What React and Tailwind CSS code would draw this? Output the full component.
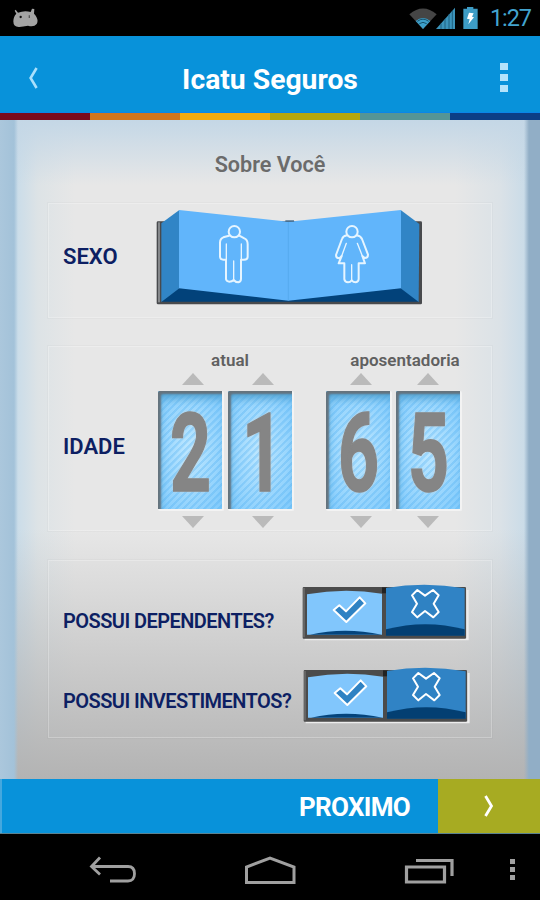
import React from 'react'

const STRIPES = ['bg-[#7a0a1c]', 'bg-[#d0761c]', 'bg-[#f0ab0c]', 'bg-[#b5a70e]', 'bg-[#549596]', 'bg-[#0c3f86]']

const StatusBar = () => (
  <div className="flex h-9 items-center bg-black pl-[12px] pr-[8px]">
    <svg className="h-[20px] w-[27px]" viewBox="0 0 81 60">
      <path d="M8 8 L11 5 L18 14 Q38 6 56 12 L60 2 L67 3 L66 17 Q82 34 74 48 Q66 58 48 53 Q32 56 22 57 Q4 58 4 40 Q4 26 13 17 Z" fill="#a3a3a3" />
      <circle cx="26" cy="27" r="3.5" fill="#111" />
      <path d="M52 22 v8" stroke="#555" strokeWidth="4" />
    </svg>
    <div className="ml-auto flex items-center">
      <svg className="h-[22px] w-[70px]" viewBox="0 0 210 66">
        <path d="M1 22 Q42 -13 83 22 L42 66 Z" fill="#454545" />
        <path d="M20 42 Q42 24 64 42 L42 66 Z" fill="#3d9fc9" />
        <path d="M25 43 Q42 30 59 43" fill="none" stroke="#16526d" strokeWidth="3" />
        <path d="M31 50 Q42 42 53 50" fill="none" stroke="#16526d" strokeWidth="3" />
        <path d="M81 66 L138 2 V66 Z" fill="#3b93ba" />
        <path d="M96 50 V66 M108 36 V66 M120 22 V66 M130 12 V66" stroke="#1f6180" strokeWidth="3" />
        <path d="M163 5 H174 V0 H193 V5 H206 V66 H163 Z" fill="#3d9cc5" />
        <path d="M180 17 L194 19 L189 29 L195 31 L178 52 L182 37 L174 35 Z" fill="#fff" />
      </svg>
      <span className="ml-[11px] w-[42px] whitespace-nowrap text-[23.5px] leading-[34px] tracking-[-1.1px] text-[#43a4cf]">1:27</span>
    </div>
  </div>
)

const Header = () => (
  <header>
    <div className="grid h-[77px] grid-cols-3 items-center border-b border-[#0a86e8] bg-[#0892da] pt-[7px]">
      <svg className="ml-[28px] h-[22px] w-[10px]" viewBox="0 0 10 22">
        <path d="M8.6 1 L2.6 11 L8.6 21" fill="none" stroke="#a9e0fc" strokeWidth="2.6" />
      </svg>
      <h1 className="mt-[5px] whitespace-nowrap text-center text-[28.3px] font-bold leading-none text-white">Icatu Seguros</h1>
      <div className="mr-[32px] flex flex-col gap-[4px] justify-self-end">
        <i className="block h-[7px] w-[8px] bg-[#b3e3fb]" />
        <i className="block h-[7px] w-[8px] bg-[#b3e3fb]" />
        <i className="block h-[7px] w-[8px] bg-[#b3e3fb]" />
      </div>
    </div>
    <div className="grid h-[7px] grid-cols-6">
      {STRIPES.map((c) => <div key={c} className={c} />)}
    </div>
  </header>
)

const Panel = ({ className, children }) => (
  <section className={`mx-[48px] border border-white/25 outline outline-black/[0.02] ${className}`}>{children}</section>
)

const Label = ({ children, className }) => (
  <span className={`whitespace-nowrap font-semibold leading-none text-[#0d1f63] ${className}`}>{children}</span>
)

const GenderSwitch = () => (
  <svg className="h-[97px] w-[267px]" viewBox="48 39 801 291">
    <rect x="50" y="79" width="796" height="249" rx="4" fill="#484a4d" />
    <rect x="54" y="82" width="6" height="240" fill="#85888b" />
    <path d="M64 320 L118 278 L445 315 L784 278 L838 320 Z" fill="#02427a" />
    <path d="M64 85 L118 45 V280 L64 321 Z" fill="#3185c6" />
    <path d="M838 87 L782 45 V280 L836 321 Z" fill="#3185c6" />
    <path d="M117 45 L445 80 L783 45 V280 L445 317 L117 280 Z" fill="#61b5fb" />
    <path d="M445 80 V317" stroke="#52a5ea" strokeWidth="2" />
    <path d="M436 78 H462" stroke="#3c6485" strokeWidth="4" />
    <g fill="none" stroke="#e6f5ff" strokeWidth="6" strokeLinecap="round" strokeLinejoin="round">
      <circle cx="283" cy="110" r="17" />
      <path d="M267 122 L250 127 Q240 131 240 143 V186 Q241 194 250 194 H258 V253 Q260 260 268 260 Q276 260 281 255 Q287 262 295 262 Q303 260 303 252 V194 H312 Q323 194 323 186 V148 Q323 134 313 130 L298 122" />
      <path d="M259 147 V194 M304 147 V194 M281 198 V255" strokeWidth="4" />
      <circle cx="636" cy="110" r="17" />
      <path d="M621 121 Q609 123 606 132 L588 180 Q588 190 598 190 L605 183 L596 205 H613 V253 Q615 262 624 262 Q631 262 635 256 Q640 262 647 262 Q656 260 656 252 V205 H675 L667 183 L674 189 Q684 189 684 179 L666 132 Q662 123 650 121" />
      <path d="M619 145 L605 183 M652 145 L667 183 M635 209 V255" strokeWidth="4" />
    </g>
  </svg>
)

const YesNoSwitch = () => (
  <svg className="h-[58px] w-[167px]" viewBox="36 39 501 174">
    <path d="M44 208 H533 V60" fill="none" stroke="#ececec" strokeWidth="6" />
    <rect x="38" y="51" width="490" height="155" rx="3" fill="#4b4b4b" />
    <path d="M42 54 V202" stroke="#737373" strokeWidth="4" />
    <path d="M276 52 H290 V70 H276 Z" fill="#222" />
    <path d="M51 73 Q163 52 276 71 V194 H51 Z" fill="#81c6fc" />
    <path d="M60 194 Q164 170 275 194 Z" fill="#04447c" />
    <path d="M288 54 Q406 34 524 55 V196 H288 Z" fill="#3083c5" />
    <path d="M288 178 Q406 147 524 178 V197 H288 Z" fill="#033f72" />
    <path d="M131 120 L148 106 L168 124 L209 82 L226 100 L169 156 Z" fill="#2f82c3" stroke="#fff" strokeWidth="6" strokeLinejoin="round" />
    <path d="M366 76 L382 60 L405 77 L429 60 L446 76 L431 101 L446 126 L430 142 L405 123 L382 142 L366 126 L381 101 Z" fill="#2f82c3" stroke="#fff" strokeWidth="6" strokeLinejoin="round" />
  </svg>
)

const Arrow = ({ className = '' }) => (
  <svg className={`h-[12px] w-[22px] ${className}`} viewBox="0 0 22 12">
    <path d="M11 0 L22 12 H0 Z" fill="#bababa" />
  </svg>
)

const Digit = ({ value, arrowClass, digitClass = '' }) => (
  <div className="flex flex-col items-center">
    <Arrow className={arrowClass} />
    <div className="mb-[5px] mt-[6px] flex h-[120px] w-[66px] items-center justify-center rounded-[2px] border-b-[2px] border-r-[2px] border-[#f3f3f3] bg-[repeating-linear-gradient(135deg,rgba(70,170,240,0.28)_0,rgba(70,170,240,0.28)_2px,transparent_2.5px,transparent_5px),radial-gradient(ellipse_at_center,#b9e5ff_10%,#86cdfc_90%)] shadow-[inset_3px_3px_2px_#65737d,inset_3px_9px_8px_-2px_#4e9fcf]">
      <span className={`mt-[8px] inline-block scale-x-[0.65] text-[110px] font-bold leading-none text-[#858585] [-webkit-text-stroke:1.5px_#858585] [text-shadow:0_0_3px_#dcc8b8] ${digitClass}`}>{value}</span>
    </div>
    <Arrow className={`rotate-180 ${arrowClass}`} />
  </div>
)

const AgePicker = ({ title, className, titleClass, children }) => (
  <div className={`flex flex-col items-center ${className}`}>
    <span className={`mb-[3px] whitespace-nowrap text-[17px] font-semibold leading-[20px] text-[#606060] ${titleClass}`}>{title}</span>
    <div className="flex gap-[4px]">{children}</div>
  </div>
)

const NavBar = () => (
  <nav className="flex h-[66px] items-start bg-black pt-[21px] text-[#a0a0a0]">
    <svg className="ml-[89px] mt-[1px] h-[29px] w-[48px]" viewBox="0 0 48 29" fill="none" stroke="currentColor" strokeWidth="2.8">
      <path d="M11 1.5 L2.5 10.5 L11 18.5 M2.5 10.5 H39 Q45.5 10.5 45.5 17.7 Q45.5 25 39 25 H21" />
    </svg>
    <svg className="ml-[107px] h-[30px] w-[52px]" viewBox="0 0 52 30" fill="none" stroke="currentColor" strokeWidth="3">
      <path d="M2.5 27.5 V12 L26 3 L50 12 V27.5 Z" />
    </svg>
    <svg className="ml-[108px] h-[30px] w-[51px]" viewBox="0 0 51 30" fill="none" stroke="currentColor" strokeWidth="3.2">
      <path d="M2.5 12 H40.5 V27 H2.5 Z M12 5.5 H48 V21" />
    </svg>
    <div className="ml-[55px] mt-[4px] flex flex-col gap-[3px]">
      <i className="block size-[5px] bg-current" />
      <i className="block size-[5px] bg-current" />
      <i className="block size-[5px] bg-current" />
    </div>
  </nav>
)

export default function App() {
  return (
    <div className="flex h-[900px] w-[540px] flex-col overflow-hidden bg-black font-['Roboto',sans-serif]">
      <StatusBar />
      <Header />
      <main className="flex h-[659px] flex-col bg-[linear-gradient(to_right,#abc7dc_0,#a3c2d9_14px,#a3c2d900_18px,#91aec600_524px,#91aec6_529px,#91aec6_540px),linear-gradient(to_bottom,#c4d7e6_0,#c4d7e600_65px),linear-gradient(to_bottom,transparent_62%,#b3b3b3_100%),linear-gradient(to_right,#c9dce9_16px,#dde3e6_38px,#e7e7e7_75px,#e7e7e7_455px,#dbe2e7_500px,#c9dbe8_526px)]">
        <h2 className="mt-[34px] text-center text-[21.6px] font-semibold leading-[22px] text-[#6b6b6b]">Sobre Você</h2>
        <Panel className="mt-[27px] flex h-[115px]">
          <Label className="ml-[14px] mt-[42px] w-[93px] text-[22px]">SEXO</Label>
          <div className="mt-[4px]"><GenderSwitch /></div>
        </Panel>
        <Panel className="mt-[28px] flex h-[185px]">
          <Label className="ml-[14px] mt-[89px] w-[95px] text-[22px]">IDADE</Label>
          <AgePicker title="atual" className="mt-[3px]" titleClass="ml-[8px]">
            <Digit value={2} arrowClass="ml-[4px]" digitClass="ml-[2px]" />
            <Digit value={1} arrowClass="ml-[4px]" digitClass="ml-[6px]" />
          </AgePicker>
          <AgePicker title="aposentadoria" className="ml-[32px] mt-[3px]" titleClass="ml-[22px]">
            <Digit value={6} arrowClass="ml-[4px]" digitClass="ml-[2px]" />
            <Digit value={5} arrowClass="-ml-[3px]" digitClass="ml-[2px]" />
          </AgePicker>
        </Panel>
        <Panel className="mt-[29px] h-[178px]">
          <div className="flex pl-[14px] pt-[22px]">
            <Label className="mt-[28px] w-[239px] text-[20px] tracking-[-0.55px]">POSSUI DEPENDENTES?</Label>
            <YesNoSwitch />
          </div>
          <div className="flex pl-[14px] pt-[25px]">
            <Label className="mt-[25px] w-[240px] text-[20px] tracking-[-0.55px]">POSSUI INVESTIMENTOS?</Label>
            <YesNoSwitch />
          </div>
        </Panel>
      </main>
      <footer className="flex h-[55px] border-b border-[#5b8290]">
        <div className="flex w-[438px] items-center justify-end border-l-2 border-[#45a8de] bg-[#0892da] pr-[28px] pt-[2px] text-[26px] font-bold leading-none tracking-[-0.7px] text-white">PROXIMO</div>
        <div className="flex flex-1 items-center justify-center bg-[#a7ab22]">
          <svg className="h-[22px] w-[10px]" viewBox="0 0 10 22">
            <path d="M1.5 1 L7.5 11 L1.5 21" fill="none" stroke="#fff" strokeWidth="2.8" />
          </svg>
        </div>
      </footer>
      <NavBar />
    </div>
  )
}
